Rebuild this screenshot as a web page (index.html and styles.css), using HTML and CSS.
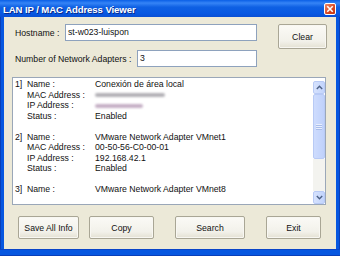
FILE: index.html
```html
<!DOCTYPE html>
<html>
<head>
<meta charset="utf-8">
<link rel="stylesheet" href="styles.css">
</head>
<body>
<div class="window">
  <div class="titlebar">
    <span class="title">LAN IP / MAC Address Viewer</span>
    <span class="close"><svg width="10" height="10" viewBox="0 0 10 10"><path d="M2.8 2.8 L7.2 7.2 M7.2 2.8 L2.8 7.2" stroke="#fff" stroke-width="1.6" stroke-linecap="square"/></svg></span>
  </div>
  <div class="frame">
    <div class="client">
      <div class="top">
        <div class="fields">
          <div class="row">
            <span class="label host">Hostname :</span>
            <div class="input wide">st-w023-luispon</div>
          </div>
          <div class="row">
            <span class="label num">Number of Network Adapters :</span>
            <div class="input narrow">3</div>
          </div>
        </div>
        <button class="btn clear">Clear</button>
      </div>
      <div class="listbox">
        <div class="items">
          <div class="entry"><span class="idx">1]</span><span class="key">Name :</span><span class="val">Conexión de área local</span></div>
          <div class="entry"><span class="idx"></span><span class="key">MAC Address :</span><span class="val"><span class="blur mac"></span></span></div>
          <div class="entry"><span class="idx"></span><span class="key">IP Address :</span><span class="val"><span class="blur ip"></span></span></div>
          <div class="entry"><span class="idx"></span><span class="key">Status :</span><span class="val">Enabled</span></div>
          <div class="entry"></div>
          <div class="entry"><span class="idx">2]</span><span class="key">Name :</span><span class="val">VMware Network Adapter VMnet1</span></div>
          <div class="entry"><span class="idx"></span><span class="key">MAC Address :</span><span class="val">00-50-56-C0-00-01</span></div>
          <div class="entry"><span class="idx"></span><span class="key">IP Address :</span><span class="val">192.168.42.1</span></div>
          <div class="entry"><span class="idx"></span><span class="key">Status :</span><span class="val">Enabled</span></div>
          <div class="entry"></div>
          <div class="entry"><span class="idx">3]</span><span class="key">Name :</span><span class="val">VMware Network Adapter VMnet8</span></div>
        </div>
        <div class="scrollbar">
          <div class="sbtn"><svg width="7" height="5" viewBox="0 0 7 5"><path d="M0.8 4 L3.5 1.3 L6.2 4" fill="none" stroke="#4d6185" stroke-width="1.4"/></svg></div>
          <div class="thumb"><span class="grip"></span></div>
          <div class="track"></div>
          <div class="sbtn"><svg width="7" height="5" viewBox="0 0 7 5"><path d="M0.8 1 L3.5 3.7 L6.2 1" fill="none" stroke="#4d6185" stroke-width="1.4"/></svg></div>
        </div>
      </div>
      <div class="buttons">
        <button class="btn save">Save All Info</button>
        <button class="btn copy">Copy</button>
        <button class="btn search">Search</button>
        <button class="btn exit">Exit</button>
      </div>
    </div>
  </div>
  <div class="bottomframe"></div>
</div>
</body>
</html>
```

FILE: styles.css
```css
html, body {
  margin: 0;
  padding: 0;
  background: #ece9d8;
}
.window {
  width: 340px;
  height: 256px;
  display: flex;
  flex-direction: column;
  font-family: "Liberation Sans", Arial, sans-serif;
  font-size: 8.7px;
  color: #111;
  overflow: hidden;
}
.titlebar {
  height: 17px;
  flex: none;
  display: flex;
  align-items: center;
  justify-content: space-between;
  padding: 0 4px 0 3px;
  background: linear-gradient(to bottom, #0a5fe6 0%, #3584f6 18%, #0e60e3 42%, #0858e2 80%, #0a4fd3 100%);
}
.title {
  color: #fff;
  font-weight: bold;
  font-size: 9.6px;
  font-family: "Liberation Sans", Arial, sans-serif;
  letter-spacing: -0.1px;
  text-shadow: 1px 1px 0 #0a2a8a;
  margin-top: 1px;
}
.close {
  width: 10px;
  height: 10px;
  border: 1px solid #fff;
  border-radius: 2px;
  background: linear-gradient(135deg, #f08a6a, #d8451f 60%, #c2350f);
  display: flex;
  margin-top: 1px;
}
.frame {
  flex: 1;
  display: flex;
  background: #0757e0;
  border-left: 1px solid #0a3fb8;
  border-right: 1px solid #0a3fb8;
  padding: 0 3px;
}
.client {
  flex: 1;
  background: #ece9d8;
  display: flex;
  flex-direction: column;
  padding: 7px 0 0 0;
}
.bottomframe {
  height: 5px;
  flex: none;
  background: #0757e0;
  border-top: 1px solid #0a45c8;
  border-bottom: 1px solid #0a3fb8;
}
.top {
  display: flex;
  align-items: flex-start;
  padding-left: 11px;
}
.fields {
  display: flex;
  flex-direction: column;
  gap: 9px;
}
.row {
  display: flex;
  align-items: center;
}
.label.host { width: 50px; }
.label.num { width: 122px; }
.input {
  border: 1px solid #8ea2bd;
  background: #fff;
  padding: 0 2px;
  line-height: 15px;
  box-sizing: border-box;
  height: 17px;
}
.input.wide { width: 192px; }
.input.narrow { width: 120px; }
.btn {
  font-family: "Liberation Sans", Arial, sans-serif;
  font-size: 8.7px;
  color: #111;
  border: 1px solid #a9a695;
  border-radius: 2px;
  background: linear-gradient(to bottom, #fbfaf6 0%, #f2f1ea 70%, #e4e1d3 100%);
  padding: 0;
  box-shadow: inset 0 0 0 1px #f8f7f2;
}
.clear {
  width: 49px;
  height: 25px;
  margin-left: 21px;
}
.listbox {
  margin: 10px 0 0 8px;
  width: 314px;
  height: 128px;
  box-sizing: border-box;
  border: 1px solid #9aa7b8;
  background: #fff;
  display: flex;
  overflow: hidden;
}
.items {
  flex: 1;
  padding: 1px 0 0 2px;
}
.entry {
  height: 10.5px;
  line-height: 10.5px;
  display: flex;
  white-space: nowrap;
}
.idx { width: 12px; }
.key { width: 68px; }
.blur {
  display: inline-block;
  height: 4px;
  border-radius: 2px;
  vertical-align: middle;
  filter: blur(0.8px);
}
.blur.mac { width: 70px; background: #b3b1b6; }
.blur.ip { width: 48px; background: #c6b0c6; }
.scrollbar {
  width: 12px;
  flex: none;
  margin: 3px 0 0 0;
  display: flex;
  flex-direction: column;
  height: 123px;
}
.sbtn {
  height: 13px;
  box-sizing: border-box;
  border: 1px solid #b8caf5;
  border-radius: 2px;
  background: linear-gradient(to right, #d6e2fd, #c2d4fc);
  display: flex;
  align-items: center;
  justify-content: center;
}
.thumb {
  height: 65px;
  box-sizing: border-box;
  border: 1px solid #b8caf5;
  border-radius: 2px;
  background: linear-gradient(to right, #cedcfd, #bfd1fb);
  display: flex;
  align-items: center;
  justify-content: center;
}
.grip {
  width: 6px;
  height: 6px;
  background: repeating-linear-gradient(to bottom, #e8effe 0 1px, #a9bdea 1px 2px);
}
.track {
  flex: 1;
  background: #f3f3ef;
}
.buttons {
  display: flex;
  padding: 11px 0 0 14px;
}
.buttons .btn { height: 23px; }
.save { width: 61px; }
.copy { width: 65px; margin-left: 10px; }
.search { width: 70px; margin-left: 21px; }
.exit { width: 55px; margin-left: 21px; }
```
